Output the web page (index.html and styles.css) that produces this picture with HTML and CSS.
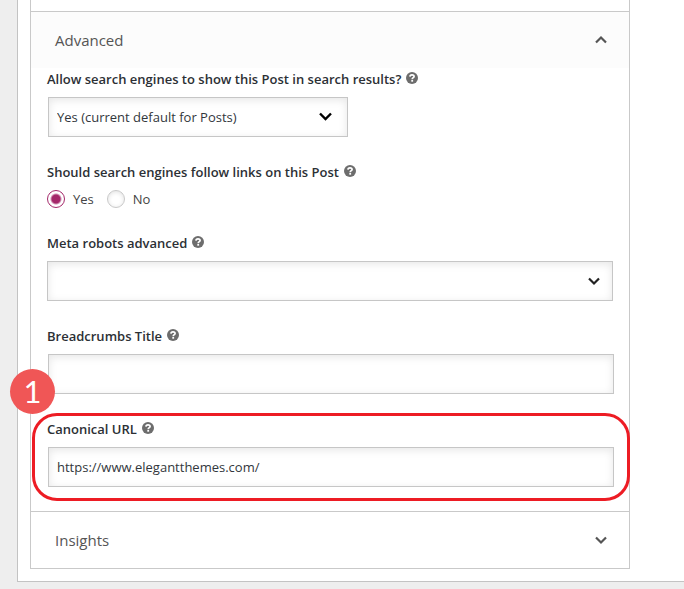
FILE: index.html
```html
<!DOCTYPE html>
<html lang="en">
<head>
<meta charset="utf-8">
<meta name="viewport" content="width=device-width, initial-scale=1">
<title>Advanced post settings</title>
<link rel="stylesheet" href="styles.css">
</head>
<body>
<svg class="sprite" aria-hidden="true">
  <symbol id="help" viewBox="0 0 12 12">
    <circle cx="6" cy="6" r="6" fill="#6d6d6d"/>
    <path d="M3.900 4.600C4 3.300 4.900 2.800 6 2.800s2.100.6 2.100 1.700C8.100 5.700 6.200 5.600 6.200 7.200" fill="none" stroke="#fff" stroke-width="1.700"/>
    <rect x="5.300" y="8" width="1.800" height="1.700" fill="#fff"/>
  </symbol>
  <symbol id="chevron" viewBox="0 0 14 10">
    <path d="M2 2.500l5 5 5-5" fill="none" stroke="currentColor" stroke-width="2.200"/>
  </symbol>
  <symbol id="chevron-bold" viewBox="0 0 14 10">
    <path d="M1 1.500l5.500 5.500L12 1.500" fill="none" stroke="currentColor" stroke-width="2.400"/>
  </symbol>
</svg>
<main class="panel">
  <div class="card">
    <section class="section">
      <h2 class="heading"><button class="toggle toggle-open" type="button" aria-expanded="true">Advanced<svg class="chevron"><use href="#chevron"/></svg></button></h2>
      <form class="fields">
        <div class="field">
          <div class="caption"><label for="index">Allow search engines to show this Post in search results?</label><button class="help" type="button" aria-label="Help"><svg><use href="#help"/></svg></button></div>
          <div class="picker picker-short shifted">
            <select class="control" id="index"><option>Yes (current default for Posts)</option></select>
            <svg class="chevron chevron-bold"><use href="#chevron-bold"/></svg>
          </div>
        </div>
        <div class="field" role="radiogroup" aria-labelledby="follow">
          <div class="caption"><span id="follow">Should search engines follow links on this Post</span><button class="help" type="button" aria-label="Help"><svg><use href="#help"/></svg></button></div>
          <div class="choices">
            <input class="radio" type="radio" name="follow" id="yes" checked><label for="yes">Yes</label>
            <input class="radio" type="radio" name="follow" id="no"><label for="no">No</label>
          </div>
        </div>
        <div class="field">
          <div class="caption"><label for="robots">Meta robots advanced</label><button class="help" type="button" aria-label="Help"><svg><use href="#help"/></svg></button></div>
          <div class="picker">
            <select class="control" id="robots"><option></option></select>
            <svg class="chevron chevron-dark"><use href="#chevron"/></svg>
          </div>
        </div>
        <div class="field">
          <div class="caption"><label for="crumbs">Breadcrumbs Title</label><button class="help" type="button" aria-label="Help"><svg><use href="#help"/></svg></button></div>
          <div class="shifted"><input class="control" type="text" id="crumbs"></div>
        </div>
        <div class="field marked">
          <div class="caption"><label for="canonical">Canonical URL</label><button class="help" type="button" aria-label="Help"><svg><use href="#help"/></svg></button></div>
          <div class="shifted"><input class="control" type="text" id="canonical" value="https://www.elegantthemes.com/"></div>
          <span class="badge">1</span>
        </div>
      </form>
    </section>
    <section class="section">
      <h2 class="heading"><button class="toggle" type="button" aria-expanded="false">Insights<svg class="chevron"><use href="#chevron"/></svg></button></h2>
    </section>
  </div>
</main>
</body>
</html>
```
FILE: styles.css
```css
* {
  box-sizing: border-box;
}

body {
  margin: 0;
  background: #eee;
  color: #32373c;
  font: 13px/22px "Open Sans", "Noto Sans", sans-serif;
}

.sprite {
  display: none;
}

.panel {
  margin-left: 17px;
  padding: 0 54px 12px 12px;
  background: #fff;
  border: solid #c3c3c3;
  border-width: 0 0 1px 1px;
}

.card {
  padding-top: 11px;
  border: solid #c9c9c9;
  border-width: 0 1px 1px;
}

.section {
  border-top: 1px solid #c9c9c9;
}

.heading {
  margin: 0;
}

.toggle {
  display: flex;
  align-items: center;
  justify-content: space-between;
  width: 100%;
  height: 56px;
  padding: 0 21px 0 24px;
  border: 0;
  background: #fff;
  color: #555;
  font: 15px/24px "Open Sans", "Noto Sans", sans-serif;
}

.toggle-open {
  background: #fcfcfc;
}

.toggle-open .chevron {
  transform: scaleY(-1);
}

.chevron {
  width: 14px;
  height: 10px;
}

.fields {
  display: flex;
  flex-direction: column;
  gap: 24px;
  padding: 0 16px 24px;
}

.field {
  display: flex;
  flex-direction: column;
  gap: 7px;
}

.caption {
  display: flex;
  align-items: center;
  gap: 5px;
  color: #2c3035;
  font-weight: 600;
}

.help {
  width: 12px;
  height: 12px;
  margin-bottom: 2px;
  padding: 0;
  border: 0;
  background: none;
}

.help svg {
  display: block;
  width: 12px;
  height: 12px;
}

.picker {
  position: relative;
}

.picker-short {
  width: 300px;
  max-width: 100%;
}

.picker .chevron {
  position: absolute;
  top: 15px;
  right: 12px;
  pointer-events: none;
}

.picker .chevron-bold {
  right: 15px;
  color: #000;
}

.chevron-dark {
  color: #222;
}

.shifted {
  margin: 0 -1px 0 1px;
}

.control {
  display: block;
  width: 100%;
  height: 40px;
  padding: 0 8px;
  appearance: none;
  border: 1px solid #c6c6c6;
  border-radius: 0;
  background: #fff;
  box-shadow: inset 0 2px 8px rgba(0, 0, 0, 0.1);
  color: #32373c;
  font: inherit;
}

.choices {
  display: flex;
  align-items: center;
  height: 18px;
  color: #444;
}

.choices label {
  margin: 0 13px 0 8px;
}

.radio {
  width: 18px;
  height: 18px;
  margin: 0;
  appearance: none;
  border: 1px solid #c8c8c8;
  border-radius: 50%;
  background: #fff;
  box-shadow: inset 0 1px 4px rgba(0, 0, 0, 0.12);
}

.radio:checked {
  border-color: #a4286a;
  background: radial-gradient(circle, #a4286a 0 4px, #fff 6px);
  box-shadow: none;
}

.marked {
  position: relative;
}

.marked::after {
  content: "";
  position: absolute;
  inset: -5px -17px -14px -15px;
  border: 3px solid #ed1c24;
  border-radius: 25px;
  pointer-events: none;
}

.badge {
  position: absolute;
  z-index: 1;
  top: -49px;
  left: -37px;
  width: 45px;
  height: 45px;
  border-radius: 50%;
  background: #f05656;
  color: #fff;
  font: 31px/44px Lato, sans-serif;
  text-align: center;
}
```
